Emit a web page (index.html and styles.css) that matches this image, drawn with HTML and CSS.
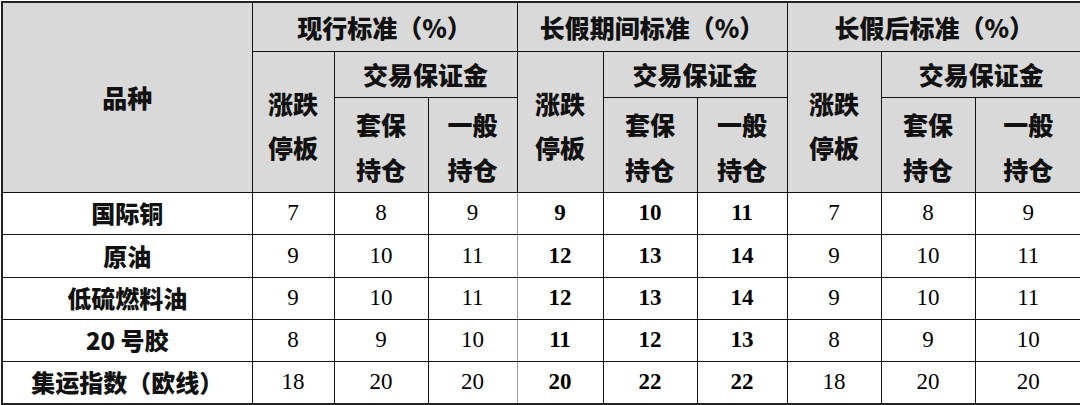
FILE: index.html
```html
<!DOCTYPE html>
<html lang="zh">
<head>
<meta charset="utf-8">
<title>保证金标准</title>
<link rel="stylesheet" href="styles.css">
</head>
<body>
<table class="grid">
  <colgroup>
    <col class="c-name">
    <col class="c-a"><col class="c-b"><col class="c-c">
    <col class="c-d"><col class="c-e"><col class="c-f">
    <col class="c-g"><col class="c-h"><col class="c-i">
  </colgroup>
  <thead>
    <tr class="h1">
      <th rowspan="3">品种</th>
      <th colspan="3">现行标准（%）</th>
      <th colspan="3">长假期间标准（%）</th>
      <th colspan="3">长假后标准（%）</th>
    </tr>
    <tr class="h2">
      <th rowspan="2" class="two z">涨跌<br>停板</th>
      <th colspan="2">交易保证金</th>
      <th rowspan="2" class="two z">涨跌<br>停板</th>
      <th colspan="2">交易保证金</th>
      <th rowspan="2" class="two z">涨跌<br>停板</th>
      <th colspan="2">交易保证金</th>
    </tr>
    <tr class="h3">
      <th class="two">套保<br>持仓</th>
      <th class="two">一般<br>持仓</th>
      <th class="two">套保<br>持仓</th>
      <th class="two">一般<br>持仓</th>
      <th class="two">套保<br>持仓</th>
      <th class="two">一般<br>持仓</th>
    </tr>
  </thead>
  <tbody>
    <tr class="r42">
      <th>国际铜</th>
      <td>7</td><td>8</td><td class="soft">9</td>
      <td class="b">9</td><td class="b">10</td><td class="b">11</td>
      <td>7</td><td>8</td><td>9</td>
    </tr>
    <tr class="r43">
      <th>原油</th>
      <td>9</td><td>10</td><td class="soft">11</td>
      <td class="b">12</td><td class="b">13</td><td class="b">14</td>
      <td>9</td><td>10</td><td>11</td>
    </tr>
    <tr class="r42">
      <th>低硫燃料油</th>
      <td>9</td><td>10</td><td class="soft">11</td>
      <td class="b">12</td><td class="b">13</td><td class="b">14</td>
      <td>9</td><td>10</td><td>11</td>
    </tr>
    <tr class="r42">
      <th>20 号胶</th>
      <td>8</td><td>9</td><td class="soft">10</td>
      <td class="b">11</td><td class="b">12</td><td class="b">13</td>
      <td>8</td><td>9</td><td>10</td>
    </tr>
    <tr class="r43">
      <th>集运指数（欧线）</th>
      <td>18</td><td>20</td><td class="soft">20</td>
      <td class="b">20</td><td class="b">22</td><td class="b">22</td>
      <td>18</td><td>20</td><td>20</td>
    </tr>
  </tbody>
</table>
</body>
</html>
```
FILE: styles.css
```css
html, body {
  margin: 0;
  padding: 0;
  background: #ffffff;
}

.grid {
  margin: 1px 0 0 1px;
  border-collapse: collapse;
  table-layout: fixed;
  width: 1080px;
  border: 2px solid #222222;
  color: #000000;
}

.c-name { width: 250px; }
.c-a { width: 82px; }
.c-b { width: 94px; }
.c-c { width: 89px; }
.c-d { width: 86px; }
.c-e { width: 94px; }
.c-f { width: 90px; }
.c-g { width: 94px; }
.c-h { width: 94px; }
.c-i { width: 107px; }

.grid th,
.grid td {
  border: 1px solid #111111;
  padding: 0;
  text-align: center;
  vertical-align: middle;
}

.grid th {
  font-family: "Noto Sans CJK SC", "Noto Sans", sans-serif;
  font-weight: 900;
  font-size: 25px;
  line-height: 30px;
  color: #111111;
}

.grid thead th {
  background: #d9d9d9;
}

.grid tbody th {
  background: #ffffff;
  font-size: 24px;
}

.h1 { height: 49px; }
.h2 { height: 46px; }
.h3 { height: 93px; }

.grid th.two {
  line-height: 45px;
  padding-top: 4px;
}

.grid th.z {
  line-height: 44px;
  padding-top: 6px;
}

.r42 { height: 42px; }
.r43 { height: 43px; }

.grid td {
  font-family: "Liberation Serif", "Times New Roman", serif;
  font-size: 23px;
  line-height: 26px;
}

.grid td.b {
  font-weight: 700;
}

.grid td.soft {
  border-right: 1px solid #9a9a9a;
}
```
